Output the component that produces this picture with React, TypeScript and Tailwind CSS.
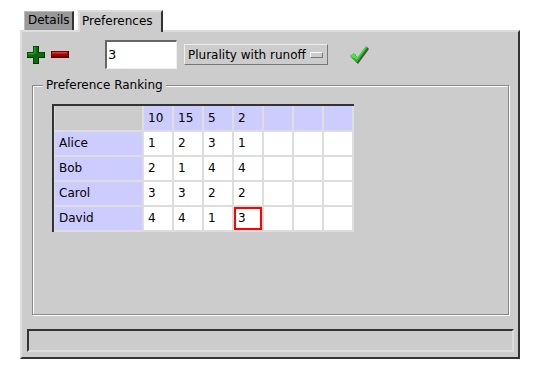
import { Fragment } from "react";

const voters = ["10", "15", "5", "2", "", "", ""];

const rows = [
  { name: "Alice", ranks: ["1", "2", "3", "1"] },
  { name: "Bob", ranks: ["2", "1", "4", "4"] },
  { name: "Carol", ranks: ["3", "3", "2", "2"] },
  { name: "David", ranks: ["4", "4", "1", "3"] },
];

function PlusIcon() {
  return (
    <svg width="18" height="18" viewBox="0 0 18 18">
      <path d="M6 0h6v6h6v6h-6v6H6v-6H0V6h6z" fill="#022e02" />
      <path d="M6.5 0.5h4.5v6h6v4.5h-6v6H6.5v-6h-6V6.5h6z" fill="#0a6c0a" />
      <path d="M7 1h1.5v6.5H7zM1 7h6v1.5H1z" fill="#2f9a2f" />
    </svg>
  );
}

function MinusIcon() {
  return (
    <svg width="18" height="7" viewBox="0 0 18 7">
      <rect x="0" y="0" width="18" height="7" fill="#4a0000" />
      <rect x="0.5" y="0.5" width="16.5" height="5" fill="#a80000" />
      <rect x="1" y="1" width="15" height="1.5" fill="#d83a3a" />
    </svg>
  );
}

function CheckIcon() {
  return (
    <svg width="20" height="20" viewBox="0 0 20 20">
      <path d="M2 12l4-3 3 5 9-12 2 2-11 15z" fill="#222" opacity="0.75" />
      <path d="M1 11l4-3 3 5 9-12 1.5 1.5-10.5 15z" fill="#1cc21c" />
      <path d="M1 11l4-3 3 5 9-12 0.8 0.8L8 14.5z" fill="#4fe04f" />
    </svg>
  );
}

export default function App() {
  return (
    <div className="w-[546px] h-[377px] bg-white pl-5 pt-[10px] font-['DejaVu_Sans',sans-serif] text-[12px] text-black">
      <div className="w-[500px]">
        {/* Tabs */}
        <div className="flex items-end h-[20px] pl-1 gap-1">
          <div className="h-[19px] w-[50px] bg-[#999] border-t border-l border-[#bbb] border-r-2 border-r-[#333] pl-[3px] leading-[17px]">
            Details
          </div>
          <div className="relative z-10 -mb-[2px] h-[22px] w-[85px] bg-[#ccc] border-t-2 border-l-2 border-[#ddd] border-r-2 border-r-[#333] pl-[2px] leading-[18px]">
            Preferences
          </div>
        </div>

        {/* Panel */}
        <div className="h-[329px] bg-[#ccc] border-2 border-t-[#ddd] border-l-[#ddd] border-r-[#333] border-b-[#333]">
          {/* Toolbar */}
          <div className="mt-2 h-[29px] flex items-center">
            <div className="ml-[5px] flex items-center">
              <PlusIcon />
            </div>
            <div className="ml-[6px] flex items-center">
              <MinusIcon />
            </div>
            <div className="ml-[36px] w-[72px] h-[29px] bg-white border-t-2 border-l-2 border-[#666] border-r border-b border-r-[#eee] border-b-[#eee] pl-[1px] text-[13px] leading-[25px]">
              3
            </div>
            <div className="ml-[7px] w-[144px] h-[21px] flex items-center border border-t-[#eee] border-l-[#eee] border-r-[#777] border-b-[#777] pl-[3px] pr-[4px]">
              <span className="flex-1">Plurality with runoff</span>
              <span className="w-[13px] h-[6px] border border-t-[#fff] border-l-[#fff] border-r-[#777] border-b-[#777] bg-[#ccc]" />
            </div>
            <div className="ml-[21px] flex items-center">
              <CheckIcon />
            </div>
          </div>

          {/* Group box */}
          <div className="relative mt-[16px] ml-[10px] w-[477px] h-[230px] border border-[#888] shadow-[inset_1px_1px_0_#fff,1px_1px_0_#fff]">
            <span className="absolute left-[10px] -top-[9px] px-[3px] bg-[#ccc] leading-[16px]">
              Preference Ranking
            </span>

            <div className="mt-[18px] ml-[19px] w-fit border-l-2 border-t-2 border-[#333] bg-[#ddd] pl-px pr-[2px] pb-[2px]">
              <div className="grid grid-cols-[87px_repeat(7,28px)] grid-rows-[24px_repeat(4,23px)] gap-[2px]">
                <div className="bg-[#ccc]" />
                {voters.map((v, i) => (
                  <div key={"h" + i} className="bg-[#ccf] pl-[4px] leading-[24px]">
                    {v}
                  </div>
                ))}
                {rows.map((r) => (
                  <Fragment key={r.name}>
                    <div className="bg-[#ccf] pl-[4px] leading-[23px]">{r.name}</div>
                    {voters.map((_, i) => {
                      const selected = r.name === "David" && i === 3;
                      return (
                        <div
                          key={i}
                          className={
                            selected
                              ? "bg-white border-2 border-[#f00] pl-[2px] leading-[19px]"
                              : "bg-white pl-[4px] leading-[23px]"
                          }
                        >
                          {r.ranks[i] ?? ""}
                        </div>
                      );
                    })}
                  </Fragment>
                ))}
              </div>
            </div>
          </div>

          {/* Status bar */}
          <div className="mt-[14px] ml-[5px] w-[487px] h-[23px] border-2 border-t-[#333] border-l-[#333] border-r-[#ddd] border-b-[#ddd]" />
        </div>
      </div>
    </div>
  );
}
